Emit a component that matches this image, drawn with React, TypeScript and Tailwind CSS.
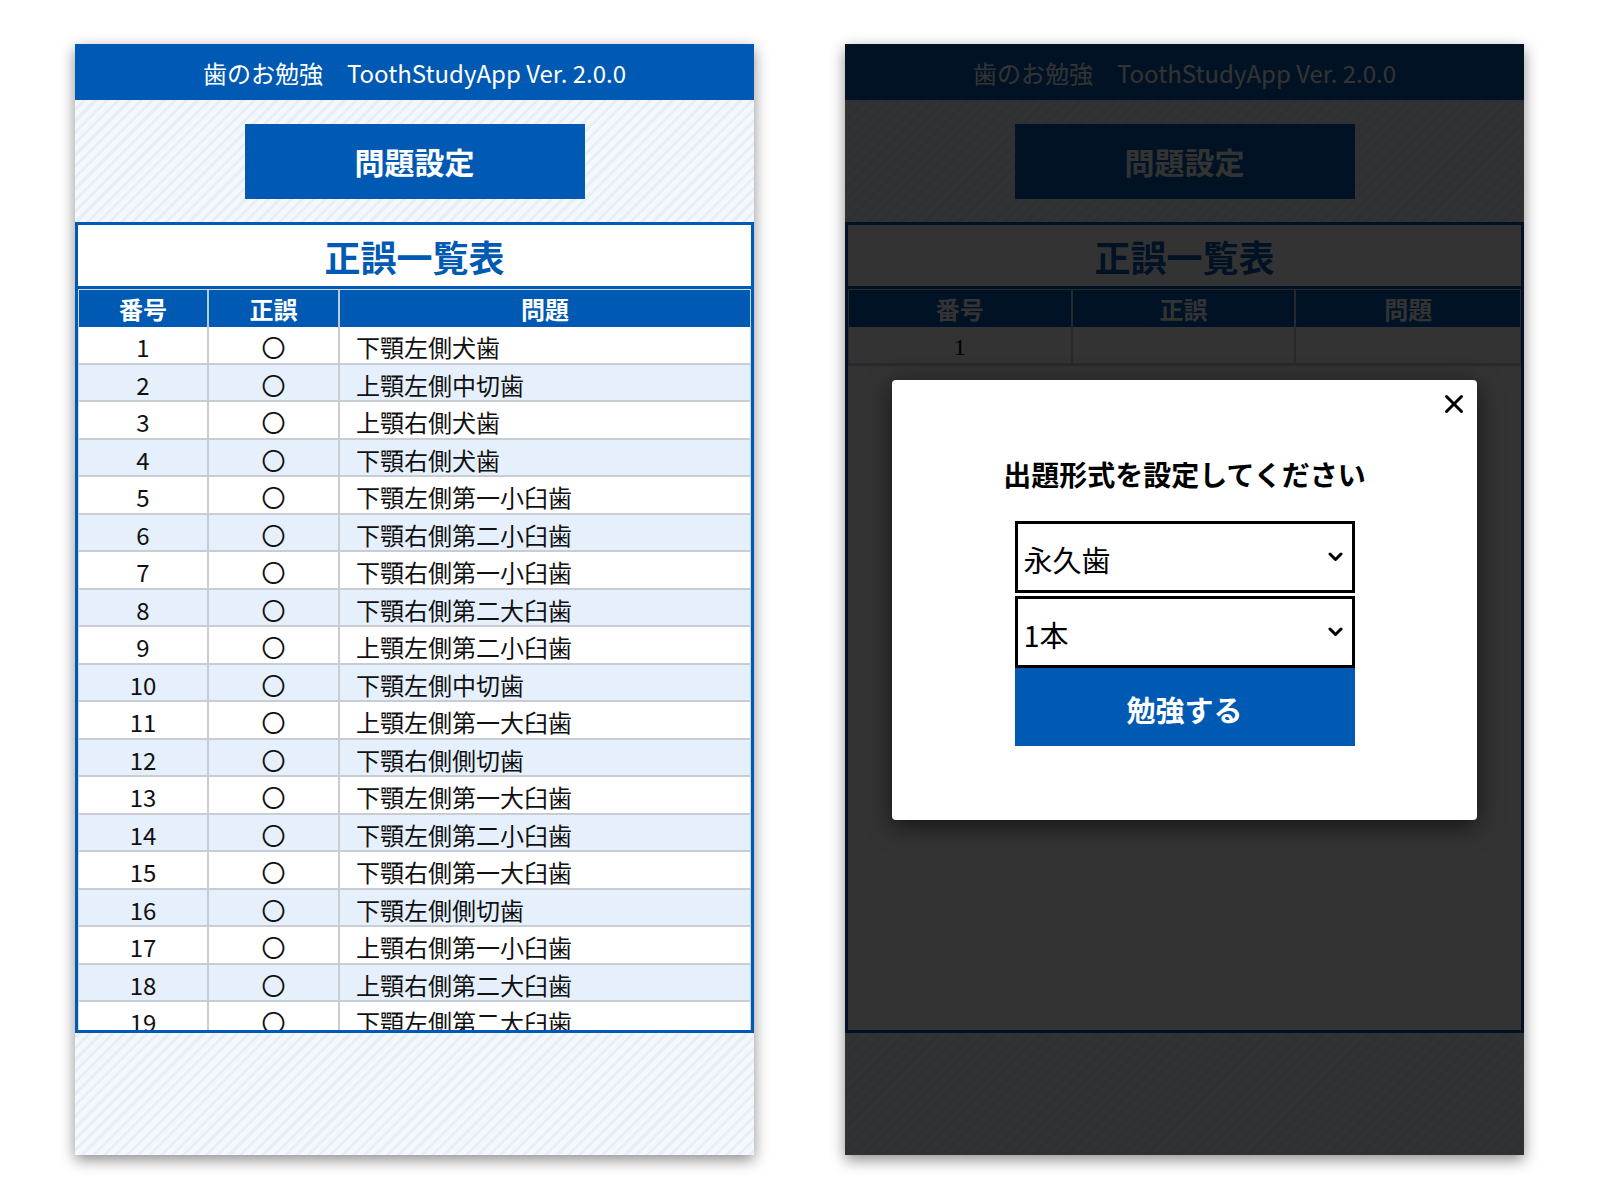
import React from "react";

const BLUE = "bg-[#0059b3]";

const rows: string[] = [
  "下顎左側犬歯",
  "上顎左側中切歯",
  "上顎右側犬歯",
  "下顎右側犬歯",
  "下顎左側第一小臼歯",
  "下顎右側第二小臼歯",
  "下顎右側第一小臼歯",
  "下顎右側第二大臼歯",
  "上顎左側第二小臼歯",
  "下顎左側中切歯",
  "上顎左側第一大臼歯",
  "下顎右側側切歯",
  "下顎左側第一大臼歯",
  "下顎左側第二小臼歯",
  "下顎右側第一大臼歯",
  "下顎左側側切歯",
  "上顎右側第一小臼歯",
  "上顎右側第二大臼歯",
  "下顎左側第二大臼歯",
];

function Chevron() {
  return (
    <svg width="15" height="10" viewBox="0 0 15 10" fill="none">
      <polyline
        points="2,2 7.5,7.5 13,2"
        stroke="#000"
        strokeWidth="3"
        strokeLinecap="round"
        strokeLinejoin="round"
      />
    </svg>
  );
}

function SelectBox({ label, extra }: { label: string; extra?: string }) {
  return (
    <div
      className={`h-[72px] border-[3px] border-black bg-white flex items-center justify-between pl-[6px] pr-[9px] text-[29px] text-black ${extra ?? ""}`}
    >
      <span className="pt-[5px]">{label}</span>
      <Chevron />
    </div>
  );
}

function Shell({ children }: { children: React.ReactNode }) {
  return (
    <div className="relative w-[679px] h-[1111px] flex flex-col bg-[repeating-linear-gradient(135deg,#f4f8fd_0px,#f4f8fd_5px,#e6eef8_5px,#e6eef8_8px)] shadow-[0_5px_14px_rgba(0,0,0,0.45)]">
      <header className="h-[56px] bg-[#0059b3] flex items-center justify-center text-white text-[24px] pt-[2px]">
        歯のお勉強　ToothStudyApp Ver. 2.0.0
      </header>
      <div className="flex justify-center pt-[24px] pb-[23px]">
        <button className="w-[340px] h-[75px] bg-[#0059b3] text-white text-[30px] font-bold">
          問題設定
        </button>
      </div>
      <div className="h-[811px] border-[3px] border-[#0059b3] bg-white overflow-hidden flex flex-col">
        <div className="h-[64px] shrink-0 border-b-[3px] border-[#0059b3] flex items-center justify-center text-[36px] font-bold text-[#0059b3]">
          正誤一覧表
        </div>
        {children}
      </div>
    </div>
  );
}

function FullTable() {
  return (
    <div className="border border-[#c9d9ea] flex flex-col">
      <div className={`grid grid-cols-[130px_131px_1fr] h-[37px] ${BLUE} text-white text-[24px] font-bold`}>
        <div className="flex items-center justify-center border-r-2 border-[#b8cbe0]">番号</div>
        <div className="flex items-center justify-center border-r-2 border-[#b8cbe0]">正誤</div>
        <div className="flex items-center justify-center">問題</div>
      </div>
      {rows.map((q, i) => (
        <div
          key={i}
          className={`grid grid-cols-[130px_131px_1fr] h-[37.5px] shrink-0 border-b-2 border-[#c9cdd2] text-[24px] text-[#111] ${
            i % 2 === 1 ? "bg-[#e6f0fc]" : "bg-white"
          }`}
        >
          <div className="flex items-center justify-center border-r-2 border-[#c9cdd2] pt-[2px]">{i + 1}</div>
          <div className="flex items-center justify-center border-r-2 border-[#c9cdd2] pt-[2px]">〇</div>
          <div className="flex items-center pl-[16px] pt-[2px]">{q}</div>
        </div>
      ))}
    </div>
  );
}

function EmptyTable() {
  return (
    <div className="border border-[#c9d9ea] flex flex-col">
      <div className={`grid grid-cols-3 h-[37px] ${BLUE} text-white text-[24px] font-bold`}>
        <div className="flex items-center justify-center border-r-2 border-[#b8cbe0]">番号</div>
        <div className="flex items-center justify-center border-r-2 border-[#b8cbe0]">正誤</div>
        <div className="flex items-center justify-center">問題</div>
      </div>
      <div className="grid grid-cols-3 h-[37.5px] border-b-2 border-[#c9cdd2] bg-white text-[24px] text-black">
        <div className="flex items-center justify-center border-r-2 border-[#c9cdd2] pt-[2px] font-['Liberation_Serif',serif]">
          1
        </div>
        <div className="border-r-2 border-[#c9cdd2]"></div>
        <div></div>
      </div>
    </div>
  );
}

export default function App() {
  return (
    <div className="w-[1600px] h-[1200px] bg-white flex gap-[91px] pl-[75px] pt-[44px] font-['Noto_Sans_CJK_JP','Noto_Sans',sans-serif]">
      <Shell>
        <FullTable />
      </Shell>
      <Shell>
        <EmptyTable />
        <div className="absolute inset-0 bg-black/80 flex justify-center items-start pt-[336px]">
          <div className="relative w-[585px] h-[440px] bg-white rounded-[4px] shadow-[0_6px_24px_rgba(0,0,0,0.6)] flex flex-col items-center pt-[73px]">
            <button className="absolute top-[14px] right-[13px] w-5 h-5" aria-label="close">
              <svg width="20" height="20" viewBox="0 0 20 20">
                <line x1="2.5" y1="2.5" x2="17.5" y2="17.5" stroke="#000" strokeWidth="3" strokeLinecap="round" />
                <line x1="17.5" y1="2.5" x2="2.5" y2="17.5" stroke="#000" strokeWidth="3" strokeLinecap="round" />
              </svg>
            </button>
            <p className="text-[28px] font-bold leading-[42px] text-black">出題形式を設定してください</p>
            <div className="mt-[26px] w-[340px] flex flex-col">
              <SelectBox label="永久歯" />
              <SelectBox label="1本" extra="mt-[3px]" />
              <button className={`h-[78px] ${BLUE} text-white text-[29px] font-bold pt-[5px]`}>勉強する</button>
            </div>
          </div>
        </div>
      </Shell>
    </div>
  );
}
